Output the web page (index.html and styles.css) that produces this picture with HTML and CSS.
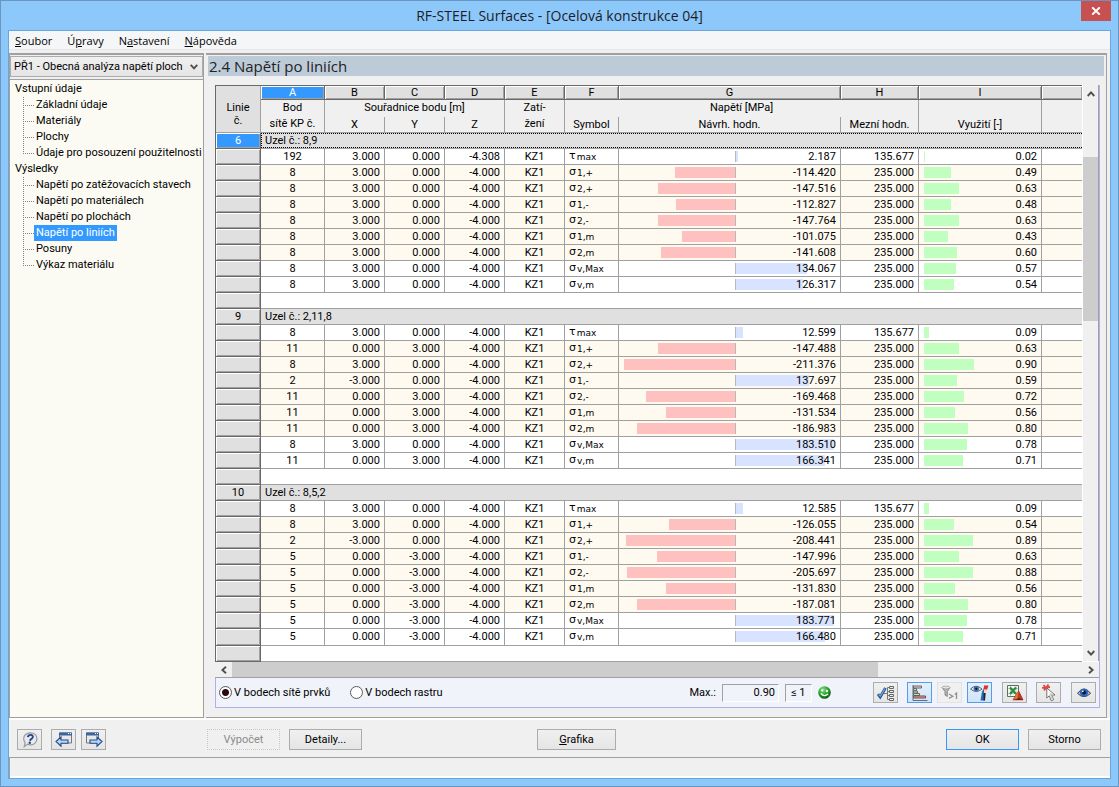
FILE: index.html
```html
<!DOCTYPE html>
<html lang="cs">
<head>
<meta charset="utf-8">
<title>RF-STEEL Surfaces - [Ocelová konstrukce 04]</title>
<link rel="stylesheet" href="styles.css">
</head>
<body>
<div class="window">
  <header class="titlebar">
    <h1 class="title">RF-STEEL Surfaces - [Ocelová konstrukce 04]</h1>
    <button class="close" type="button" aria-label="Zavřít">
      <svg width="10" height="8" viewBox="0 0 10 8"><path d="M1.2 .3 8.8 7.7M8.8 .3 1.2 7.7" stroke="#fff" stroke-width="1.9"/></svg>
    </button>
  </header>

  <div class="client">
    <nav class="menu">
      <a href="#"><u>S</u>oubor</a>
      <a href="#">Ú<u>p</u>ravy</a>
      <a href="#">N<u>a</u>stavení</a>
      <a href="#"><u>N</u>ápověda</a>
    </nav>

    <div class="work">
      <aside class="side">
        <div class="combo">
          <select aria-label="Případ"><option>PŘ1 - Obecná analýza napětí ploch</option></select>
          <svg class="chevron" width="8" height="6" viewBox="0 0 8 6"><path d="M.7 .8 4 4.4 7.3 .8" fill="none" stroke="#505050" stroke-width="1.9"/></svg>
        </div>
        <div class="tree">
          <a class="root" href="#">Vstupní údaje</a>
          <ul>
            <li><a href="#">Základní údaje</a></li>
            <li><a href="#">Materiály</a></li>
            <li><a href="#">Plochy</a></li>
            <li><a href="#">Údaje pro posouzení použitelnosti</a></li>
          </ul>
          <a class="root" href="#">Výsledky</a>
          <ul>
            <li><a href="#">Napětí po zatěžovacích stavech</a></li>
            <li><a href="#">Napětí po materiálech</a></li>
            <li><a href="#">Napětí po plochách</a></li>
            <li><a class="current" href="#">Napětí po liniích</a></li>
            <li><a href="#">Posuny</a></li>
            <li><a href="#">Výkaz materiálu</a></li>
          </ul>
        </div>
      </aside>

      <main class="content">
        <h2 class="heading">2.4 Napětí po liniích</h2>
        <div class="sheet">
          <div class="sheet-top">
            <table class="grid">
              <colgroup>
                <col class="c-head"><col class="c-a"><col class="c-xyz"><col class="c-xyz"><col class="c-xyz"><col class="c-xyz"><col class="c-f"><col class="c-g"><col class="c-h"><col class="c-i"><col>
              </colgroup>
              <thead>
                <tr class="letters">
                  <th class="corner" rowspan="3"><span>Linie</span><span>č.</span></th>
                  <th class="active">A</th><th>B</th><th>C</th><th>D</th><th>E</th><th>F</th><th>G</th><th>H</th><th>I</th><th></th>
                </tr>
                <tr class="names">
                  <th rowspan="2">Bod<br>sítě KP č.</th>
                  <th colspan="3" class="group">Souřadnice bodu [m]</th>
                  <th rowspan="2">Zatí-<br>žení</th>
                  <th colspan="3" class="group">Napětí [MPa]</th>
                  <th class="group"></th>
                  <th class="group"></th>
                </tr>
                <tr class="names">
                  <th>X</th><th>Y</th><th>Z</th><th>Symbol</th><th>Návrh. hodn.</th><th>Mezní hodn.</th><th>Využití [-]</th><th></th>
                </tr>
              </thead>
              <tbody id="rows"></tbody>
            </table>
            <div class="vscroll">
              <button type="button" aria-label="Nahoru"><svg width="8" height="6" viewBox="0 0 8 6"><path d="M.7 5 4 1.4 7.3 5" fill="none" stroke="#505050" stroke-width="1.9"/></svg></button>
              <div class="vtrack"><div class="vthumb"></div></div>
              <button type="button" aria-label="Dolů"><svg width="8" height="6" viewBox="0 0 8 6"><path d="M.7 1 4 4.6 7.3 1" fill="none" stroke="#505050" stroke-width="1.9"/></svg></button>
            </div>
          </div>
          <div class="hscroll">
            <button type="button" aria-label="Vlevo"><svg width="6" height="8" viewBox="0 0 6 8"><path d="M5 .7 1.4 4 5 7.3" fill="none" stroke="#505050" stroke-width="1.9"/></svg></button>
            <div class="htrack"><div class="hthumb"></div></div>
            <button type="button" aria-label="Vpravo"><svg width="6" height="8" viewBox="0 0 6 8"><path d="M1 .7 4.6 4 1 7.3" fill="none" stroke="#505050" stroke-width="1.9"/></svg></button>
          </div>
          <div class="options">
            <label class="choice"><input type="radio" name="where" checked> V bodech sítě prvků</label>
            <label class="choice"><input type="radio" name="where"> V bodech rastru</label>
            <div class="maximum">
              <label for="max">Max.:</label>
              <input id="max" class="maxval" value="0.90" readonly>
              <output class="limit">≤ 1</output>
              <svg class="smiley" width="13" height="13" viewBox="0 0 13 13">
                <defs><radialGradient id="gs" cx=".38" cy=".28" r=".8"><stop offset="0" stop-color="#8be28b"/><stop offset=".5" stop-color="#27a32b"/><stop offset="1" stop-color="#074d0b"/></radialGradient></defs>
                <circle cx="6.5" cy="6.5" r="6.3" fill="url(#gs)"/>
                <circle cx="4.2" cy="4.4" r="1.1" fill="#fff"/><circle cx="9" cy="5" r="1.2" fill="#fff"/>
                <path d="M2.8 7.4Q6 11.4 10.2 7.9" fill="none" stroke="#fff" stroke-width="1.3"/>
              </svg>
            </div>
            <div class="tools">
              <button class="icon" type="button" aria-label="Výběr detailů">
                <svg width="18" height="16" viewBox="0 0 18 16">
                  <path d="M1 9 3.2 12 8.500 3" fill="none" stroke="#27518c" stroke-width="2.800"/><path d="M1.600 9.300 3.300 11.300 8 3.600" fill="none" stroke="#6ba6e4" stroke-width="1.200"/>
                  <path d="M7 8.500h3.500M10.500 2.500v12M10.500 2.500h2M10.500 6.500h2M10.500 10.500h2M10.500 14.500h2" fill="none" stroke="#777"/>
                  <path d="M12.500 1.500h4v2h-4zM12.500 5.500h4v2h-4zM12.500 9.500h4v2h-4zM12.500 13.500h4v2h-4z" fill="#eee" stroke="#666"/>
                </svg>
              </button>
              <button class="icon on" type="button" aria-label="Barevné sloupce">
                <svg width="18" height="16" viewBox="0 0 18 16">
                  <path d="M2.500 1h8v2h-8z" fill="#f8cfc8" stroke="#666"/><path d="M2.500 3.500h3v2h-3zM2.500 8.500h6v2h-6z" fill="#b4efae" stroke="#666"/>
                  <path d="M2.500 6h4v2h-4z" fill="#f8cfc8" stroke="#666"/>
                  <path d="M2.500 11h12v2h-12z" fill="#f0a5a2" stroke="#744"/><path d="M2 0v15.500h14.500" fill="none" stroke="#5d6f82"/>
                </svg>
              </button>
              <button class="icon off" type="button" aria-label="Filtr" disabled>
                <svg width="18" height="16" viewBox="0 0 18 16">
                  <path d="M1 2.500h8L6.300 6.500v5L4 10V6.500z" fill="#b4b4b4" stroke="#8a8a8a"/><ellipse cx="5" cy="2.500" rx="4" ry="1.400" fill="#e4e4e4" stroke="#999" stroke-width=".7"/>
                  <path d="m8 9 3.800 2.200L8 13.400M13.700 9.500l1.800-1.400V14" fill="none" stroke="#909090" stroke-width="1.300"/>
                </svg>
              </button>
              <button class="icon on spaced-after" type="button" aria-label="Barevná stupnice">
                <svg width="20" height="16" viewBox="0 0 20 16">
                  <path d="M.5 4Q6-1.600 12 4 6 9 .5 4z" fill="#dce9f5" stroke="#555" stroke-width=".9"/><circle cx="6.300" cy="3.800" r="2.700" fill="#3972bd"/><circle cx="6.300" cy="3.800" r="1.100" fill="#111"/>
                  <path d="M10.500 15.500 12 6.500 15.500 1l-1 14.500z" fill="#2c68ba"/><path d="M14 .5h4.500L17 5l-3.500.500z" fill="#d8342a"/><path d="M14 4.500h3.200L16 9h-2z" fill="#f3d9cc"/><path d="M13.700 8h2l-.7 7.500h-1.500z" fill="#222"/>
                </svg>
              </button>
              <button class="icon" type="button" aria-label="Export do Excelu">
                <svg width="18" height="16" viewBox="0 0 18 16">
                  <path d="M1.500 .5h11v11h-11z" fill="#f4f8f4" stroke="#5b705f"/><path d="M2 3.500h10M2 8.500h10M4.500 1v10M10 1v10" stroke="#a4bca7" stroke-width=".7"/>
                  <path d="m4 2.500 6 6.500M10 2.500 4 9" stroke="#2b8a3c" stroke-width="2.100"/>
                  <path d="M7 14.800 12.600 6 17 14.800z" fill="#c4391d" stroke="#812016" stroke-width=".7"/><path d="M12.600 6 11.300 14.800H7z" fill="#e5763a"/><path d="m7 15 10-.1-3.500-2z" fill="#7b1a14"/>
                </svg>
              </button>
              <button class="icon" type="button" aria-label="Výběr v grafice">
                <svg width="18" height="18" viewBox="0 0 18 18">
                  <path d="M2 3.800 10 3M3.500 1l4.500 5M8.500 .5 4 6.500" stroke="#dc4a4a" stroke-width="1.800"/>
                  <path d="M6.800 4v10l2.500-2.200 2 5 2.300-1.100-2-4.700h3.400z" fill="#fff" stroke="#666" stroke-width=".9"/><path d="m9.500 8.500 4.500 2.600-2.600.2 1.800 4-1.200.6-2-5z" fill="#c9c9c9"/>
                </svg>
              </button>
              <button class="icon spaced-before" type="button" aria-label="Režim zobrazení">
                <svg width="16" height="12" viewBox="0 0 16 12">
                  <path d="M1.500 6.300Q8-2 14.600 6.300 8 13 1.500 6.300z" fill="#a9c4ec" stroke="#2f3e58"/><circle cx="8" cy="5.600" r="4.100" fill="#2f66ba"/><circle cx="8" cy="5.600" r="2" fill="#0a1222"/><circle cx="6.800" cy="4.300" r=".9" fill="#fff"/>
                </svg>
              </button>
            </div>
          </div>
        </div>
      </main>
    </div>

    <footer class="actions">
      <div class="nav">
        <button class="icon" type="button" aria-label="Nápověda">
          <svg width="18" height="16" viewBox="0 0 18 16">
            <path d="M9.300 .8c4 0 6.600 2.600 6.600 6s-2.700 6-6.400 6c-1.200 0-2-.2-3-.7L3.300 14.600l.8-4C3.100 9.500 2.700 8.200 2.700 6.800c0-3.400 2.600-6 6.600-6z" fill="#e7ebf1" stroke="#999" stroke-width="1.200"/>
            <path d="M6.800 5.200Q7.200 2.800 9.700 2.900q2.400.2 2.100 2.200-.3 1.400-1.700 2-.9.500-1 1.700" fill="none" stroke="#2a4585" stroke-width="1.900"/><circle cx="8.800" cy="10.700" r="1.200" fill="#2a4585"/>
          </svg>
        </button>
        <button class="icon gap-wide" type="button" aria-label="Předchozí">
          <svg width="18" height="16" viewBox="0 0 18 16">
            <path d="M4.500 1h12v10h-12z" fill="#e8e8e8" stroke="#777"/><path d="M4 .5h13v3H4z" fill="#3a659f"/><path d="M13 1.500h1M15 1.500h1" stroke="#fff"/>
            <path d="M1 9.500 6 5v3h7v3.200H6v3z" fill="#b4d8fa" stroke="#27498a" stroke-width="1.100"/>
          </svg>
        </button>
        <button class="icon" type="button" aria-label="Další">
          <svg width="18" height="16" viewBox="0 0 18 16">
            <path d="M1.500 1h12v10h-12z" fill="#e8e8e8" stroke="#777"/><path d="M1 .5h13v3H1z" fill="#3a659f"/><path d="M10 1.500h1M12 1.500h1" stroke="#fff"/>
            <path d="M17 9.500 12 5v3H5v3.200h7v3z" fill="#b4d8fa" stroke="#27498a" stroke-width="1.100"/>
          </svg>
        </button>
      </div>
      <div class="calc">
        <button class="btn" type="button" disabled>Výpočet</button>
        <button class="btn" type="button">Detaily...</button>
      </div>
      <button class="btn graphics" type="button"><u>G</u>rafika</button>
      <div class="confirm">
        <button class="btn primary" type="button">OK</button>
        <button class="btn" type="button">Storno</button>
      </div>
    </footer>
    <div class="status"></div>
  </div>
</div>
<script src="app.js"></script>
</body>
</html>
```
FILE: styles.css
```css
* { box-sizing: border-box; }

body {
  margin: 0;
  font: 11px/16px Roboto, "Liberation Sans", sans-serif;
  color: #000;
}
a { color: inherit; text-decoration: none; }
button, select, input { font: inherit; color: inherit; margin: 0; }
button svg { display: block; }

.window {
  display: flex;
  flex-direction: column;
  min-height: 100vh;
  padding: 0 7px 7px;
  border: 1px solid #6996c0;
  background: #8dc8fb;
}

/* title bar */
.titlebar {
  display: grid;
  grid-template-columns: 30px 1fr 30px;
  height: 29px;
}
.title {
  grid-column: 2;
  margin: 0;
  font: 14px/30px "Open Sans", "Noto Sans", sans-serif;
  color: #1c1c28;
  text-align: center;
}
.close {
  display: grid;
  place-items: center;
  height: 20px;
  padding: 0;
  border: 0;
  background: #c75050;
}

.client {
  flex: 1;
  display: flex;
  flex-direction: column;
  border: 1px solid #6ba5db;
  background: #f0f0f0;
}

/* menu */
.menu {
  display: flex;
  gap: 15px;
  height: 19px;
  padding: 0 6px;
  border-bottom: 1px solid #e6e7e8;
  background: #f5f6f7;
  font: 11px/20px "Open Sans", "Noto Sans", sans-serif;
}

.work {
  flex: 1;
  display: grid;
  grid-template-columns: 195px 1fr;
  gap: 2px;
  padding: 3px 3px 0 0;
  border-bottom: 2px solid #fff;
}

/* navigator */
.side {
  display: flex;
  flex-direction: column;
  border: 1px solid #a0a0a0;
  border-top-width: 2px;
}
.combo {
  display: grid;
  align-items: center;
  height: 21px;
  margin: 1px 0 2px;
}
.combo > * { grid-area: 1 / 1; }
.combo select {
  width: 100%;
  height: 21px;
  padding: 0 16px 0 3px;
  border: 1px solid #acacac;
  border-radius: 0;
  background: linear-gradient(#f0f0f0, #e5e5e5);
  appearance: none;
}
.chevron { justify-self: end; margin-right: 5px; pointer-events: none; }
.tree {
  flex: 1;
  padding: 1px 5px 0;
  border-top: 1px solid #a0a0a0;
  background: #fcfbf3;
  white-space: nowrap;
}
.tree ul { margin: 0; padding: 0 0 0 8px; list-style: none; }
.tree li { display: flex; height: 16px; }
.tree li::before {
  content: "";
  flex: none;
  width: 10px;
  height: 8px;
  border-left: 1px dotted #808080;
  border-bottom: 1px dotted #808080;
}
.tree li:not(:last-child) {
  background: repeating-linear-gradient(#808080 0 1px, transparent 1px 2px) 0 0 / 1px 100% no-repeat;
}
.tree .root { display: block; }
.tree li a { padding: 0 2px; }
.tree .current { background: #3399ff; color: #fff; }

/* content panel */
.content {
  display: flex;
  flex-direction: column;
  min-width: 0;
  padding: 1px 1px 9px;
  border: 1px solid #a0a0a0;
  border-width: 2px 1px 1px 0;
}
.heading {
  margin: 0 1px 9px;
  padding-left: 1px;
  background: #bdcbd9;
  font: 15px/20px "Open Sans", "Noto Sans", sans-serif;
  color: #222;
}

.sheet {
  margin: 0 5px 0 8px;
  border-right: 1px solid #b0b0ec;
}
.sheet-top { display: flex; }

/* result table */
.grid {
  flex: 1;
  width: 0;
  table-layout: fixed;
  border-collapse: separate;
  border-spacing: 0;
  border-top: 1px solid #696969;
  border-left: 1px solid #696969;
}
.c-head { width: 45px; }
.c-a { width: 64px; }
.c-xyz { width: 60px; }
.c-f { width: 54px; }
.c-g { width: 222px; }
.c-h { width: 78px; }
.c-i { width: 123px; }

.grid th, .grid td {
  height: 16px;
  padding: 0;
  border: 0 solid #a0a0a0;
  border-width: 0 1px 1px 0;
  line-height: 15px;
  font-weight: normal;
  white-space: nowrap;
  overflow: hidden;
}
.letters th {
  height: 14px;
  border-color: #696969;
  background: #e0e0e0;
  box-shadow: inset 1px 1px #fff, inset -1px -1px #a0a0a0;
  line-height: 13px;
}
.grid .letters .active { background: #3399ff; color: #fff; }
.grid .letters .corner {
  padding-top: 9px;
  border-color: #a0a0a0;
  box-shadow: none;
}
.corner span { display: block; }
.names th { background: #f0f0f0; }
.grid .names th { line-height: 16px; }
.grid .names .group { border-bottom: 0; }
.grid .names th:not(.group):not([rowspan]) { line-height: 15px; }

.grid tbody th {
  border-color: #696969;
  background: #e0e0e0;
  box-shadow: inset 1px 1px #fff, inset -1px -1px #a0a0a0;
}
.grid tbody th.active { background: #3399ff; color: #fff; }
.grid tbody td { background: #fff; text-align: right; padding-right: 4px; }
.grid tbody tr.tinted td { background: #fffaf0; }
.grid tbody tr.blank td { border-right: 0; }
.grid tbody tr.node td { padding: 0; border-right: 0; background: #e0e0e0; text-align: left; }
.node div { padding-left: 4px; }
.node .focus {
  height: 15px;
  padding-left: 3px;
  border: 1px dotted #000;
  border-right: 0;
  line-height: 14px;
}
.grid tbody td.mid { text-align: center; padding-right: 0; }
.grid tbody td.symbol { text-align: left; padding-left: 4px; }
.symbol div { display: flex; height: 15px; font-family: "DejaVu Sans", sans-serif; line-height: 14px; }
.symbol small { padding-left: 1px; font: 9px/17px "DejaVu Sans", sans-serif; }
.grid tbody td.last, .grid .letters th:last-child, .grid .names th:last-child { border-right: 0; }

.stress {
  display: grid;
  grid-template-columns: 118fr 100fr;
  align-items: center;
}
.stress .value { grid-area: 1 / 1 / 2 / 3; }
.half { grid-row: 1; height: 11px; }
.half.left { grid-column: 1; border-right: 1px solid #b8b8b8; }
.half.right { grid-column: 2; }
.half div { height: 11px; }
.half.left div { margin-left: auto; background: #ffc0c0; }
.half.right div { background: #d8e4ff; }

.usage { display: grid; align-items: center; padding-left: 5px; }
.usage > * { grid-area: 1 / 1; }
.usage .fill { height: 11px; background: #c0ffc0; }

/* scroll bars */
.vscroll {
  display: flex;
  flex-direction: column;
  width: 17px;
  border-left: 1px solid #fff;
  border-right: 1px solid #a0a0a0;
}
.vscroll button, .hscroll button {
  display: grid;
  place-items: center;
  padding: 0;
  border: 0;
  background: #f0f0f0;
}
.vscroll button { height: 17px; }
.vtrack { flex: 1; padding-top: 55px; }
.vthumb { height: 164px; background: #cdcdcd; }
.hscroll {
  display: flex;
  height: 17px;
  border-top: 1px solid #fff;
  border-bottom: 1px solid #a0a0a0;
}
.hscroll button { width: 17px; }
.htrack { flex: 1; }
.hthumb { width: 76%; height: 15px; background: #cdcdcd; }

/* options under the table */
.options {
  display: flex;
  align-items: center;
  height: 30px;
  padding: 0 3px;
  border-left: 1px solid #b0b0ec;
  border-bottom: 1px solid #b0b0ec;
  background: #f0f3f9;
}
.choice { display: flex; align-items: center; gap: 2px; margin-right: 20px; }
.choice input {
  width: 13px;
  height: 13px;
  border: 1px solid #5a5a5a;
  border-radius: 50%;
  background: #fff;
  appearance: none;
}
.choice input:checked { background: radial-gradient(#2a0a12 0 3px, #fff 4px); }
.maximum { display: flex; align-items: center; gap: 6px; margin-left: auto; }
.maxval, .limit {
  height: 18px;
  padding: 0 3px;
  border: 1px solid #a0a0a0;
  border-right-color: #fff;
  border-bottom-color: #fff;
  border-radius: 0;
  background: #f0f3f9;
}
.maxval { width: 57px; text-align: right; }
.limit { width: 27px; padding: 0 5px; }
.tools { display: flex; gap: 5px; margin-left: 42px; }
.icon {
  display: grid;
  place-items: center;
  width: 25px;
  height: 21px;
  padding: 0;
  border: 1px solid #acacac;
  background: linear-gradient(#f0f0f0, #e5e5e5);
}
.icon.on { border-color: #569de5; background: linear-gradient(#e4f0fc, #cfe4fa); }
.icon.off { border: 1px solid #e2e2e2; background: #f0f0f0; }
.tools .icon:first-child, .tools .icon:nth-child(5) { margin-right: 4px; }
.tools .spaced-after { margin-right: 5px; }
.tools .spaced-before { margin-left: 5px; }

/* bottom bar */
.actions { display: flex; padding: 9px 9px 7px 8px; }
.nav { display: flex; gap: 5px; width: 190px; }
.gap-wide { margin-left: 4px; }
.calc, .confirm { display: flex; gap: 9px; }
.btn {
  width: 73px;
  height: 21px;
  padding: 0;
  border: 1px solid #acacac;
  background: linear-gradient(#f0f0f0, #e5e5e5);
}
.btn:disabled { border: 1px dotted #c8c8c8; background: #f0f0f0; color: #8a8a8a; }
.graphics { width: 79px; margin-left: 175px; }
.primary { border-color: #3399ff; }
.confirm { margin-left: auto; }

.status {
  height: 21px;
  border-top: 1px solid #a0a0a0;
  border-left: 1px solid #a0a0a0;
  box-shadow: inset 0 -2px #fff;
}
```
FILE: app.js
```js
// Each row: point, X, Y, Z, symbol, design stress, limit stress, usage
const groups = [
  { line: 6, node: "Uzel č.: 8,9", rows: [
    [192, "3.000", "0.000", "-4.308", "τmax", "2.187", "135.677", "0.02"],
    [8, "3.000", "0.000", "-4.000", "σ1,+", "-114.420", "235.000", "0.49"],
    [8, "3.000", "0.000", "-4.000", "σ2,+", "-147.516", "235.000", "0.63"],
    [8, "3.000", "0.000", "-4.000", "σ1,-", "-112.827", "235.000", "0.48"],
    [8, "3.000", "0.000", "-4.000", "σ2,-", "-147.764", "235.000", "0.63"],
    [8, "3.000", "0.000", "-4.000", "σ1,m", "-101.075", "235.000", "0.43"],
    [8, "3.000", "0.000", "-4.000", "σ2,m", "-141.608", "235.000", "0.60"],
    [8, "3.000", "0.000", "-4.000", "σv,Max", "134.067", "235.000", "0.57"],
    [8, "3.000", "0.000", "-4.000", "σv,m", "126.317", "235.000", "0.54"]
  ] },
  { line: 9, node: "Uzel č.: 2,11,8", rows: [
    [8, "3.000", "0.000", "-4.000", "τmax", "12.599", "135.677", "0.09"],
    [11, "0.000", "3.000", "-4.000", "σ1,+", "-147.488", "235.000", "0.63"],
    [8, "3.000", "0.000", "-4.000", "σ2,+", "-211.376", "235.000", "0.90"],
    [2, "-3.000", "0.000", "-4.000", "σ1,-", "137.697", "235.000", "0.59"],
    [11, "0.000", "3.000", "-4.000", "σ2,-", "-169.468", "235.000", "0.72"],
    [11, "0.000", "3.000", "-4.000", "σ1,m", "-131.534", "235.000", "0.56"],
    [11, "0.000", "3.000", "-4.000", "σ2,m", "-186.983", "235.000", "0.80"],
    [8, "3.000", "0.000", "-4.000", "σv,Max", "183.510", "235.000", "0.78"],
    [11, "0.000", "3.000", "-4.000", "σv,m", "166.341", "235.000", "0.71"]
  ] },
  { line: 10, node: "Uzel č.: 8,5,2", rows: [
    [8, "3.000", "0.000", "-4.000", "τmax", "12.585", "135.677", "0.09"],
    [8, "3.000", "0.000", "-4.000", "σ1,+", "-126.055", "235.000", "0.54"],
    [2, "-3.000", "0.000", "-4.000", "σ2,+", "-208.441", "235.000", "0.89"],
    [5, "0.000", "-3.000", "-4.000", "σ1,-", "-147.996", "235.000", "0.63"],
    [5, "0.000", "-3.000", "-4.000", "σ2,-", "-205.697", "235.000", "0.88"],
    [5, "0.000", "-3.000", "-4.000", "σ1,m", "-131.830", "235.000", "0.56"],
    [5, "0.000", "-3.000", "-4.000", "σ2,m", "-187.081", "235.000", "0.80"],
    [5, "0.000", "-3.000", "-4.000", "σv,Max", "183.771", "235.000", "0.78"],
    [5, "0.000", "-3.000", "-4.000", "σv,m", "166.480", "235.000", "0.71"]
  ] }
];

const LEFT_RANGE = 221;   // MPa across the left half of the stress cell
const RIGHT_RANGE = 188;  // MPa across the right half

function stressCell(text) {
  const v = Number(text);
  const left = v < 0 ? (-v / LEFT_RANGE) * 100 : 0;
  const right = v > 0 ? Math.min(100, (v / RIGHT_RANGE) * 100) : 0;
  return `<td><div class="stress">
    <div class="half left"><div style="width:${left}%"></div></div>
    <div class="half right"><div style="width:${right}%"></div></div>
    <span class="value">${text}</span></div></td>`;
}

function dataRow([point, x, y, z, symbol, stress, limit, usage]) {
  const plain = symbol === "τmax" || symbol.startsWith("σv");
  return `<tr class="${plain ? "" : "tinted"}"><th></th>
    <td class="mid">${point}</td><td>${x}</td><td>${y}</td><td>${z}</td>
    <td class="mid">KZ1</td>
    <td class="symbol"><div>${symbol[0]}<small>${symbol.slice(1)}</small></div></td>
    ${stressCell(stress)}<td>${limit}</td>
    <td><div class="usage"><div class="fill" style="width:${usage * 49}%"></div><span>${usage}</span></div></td>
    <td class="last"></td></tr>`;
}

document.getElementById("rows").innerHTML = groups.map((g, i) =>
  `<tr class="node"><th class="${i === 0 ? "active" : ""}">${g.line}</th>
   <td colspan="10"><div class="${i === 0 ? "focus" : ""}">${g.node}</div></td></tr>` +
  g.rows.map(dataRow).join("") +
  `<tr class="blank"><th></th><td colspan="10"></td></tr>`
).join("");
```
